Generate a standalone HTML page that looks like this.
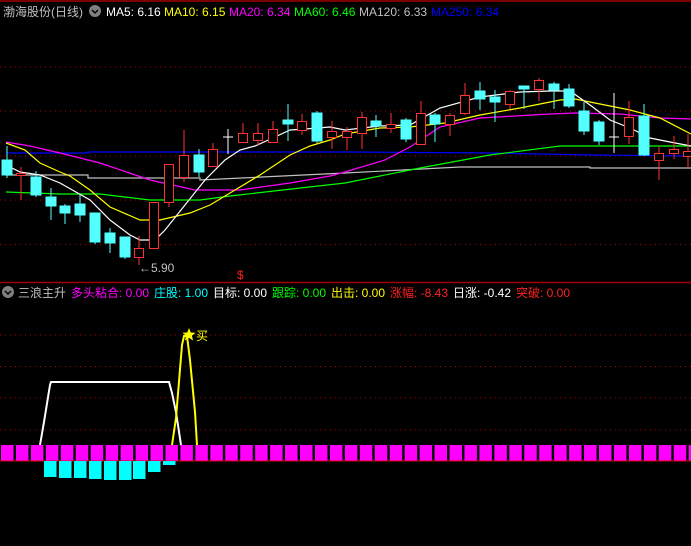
<!DOCTYPE html>
<html><head><meta charset="utf-8"><style>
html,body{margin:0;padding:0;background:#000;width:691px;height:546px;overflow:hidden}
svg{display:block}
text{font-family:"Liberation Sans","Noto Sans CJK SC",sans-serif;font-size:12px}
</style></head><body>
<svg width="691" height="546" viewBox="0 0 691 546" xmlns="http://www.w3.org/2000/svg">
<defs>
<pattern id="mb" x="1" y="445" width="14.95" height="16" patternUnits="userSpaceOnUse"><rect x="0" y="0" width="12.5" height="16" fill="#ff00ff"/></pattern>
</defs>
<rect width="691" height="546" fill="#000"/>
<line x1="0" y1="1" x2="691" y2="1" stroke="#a00000" stroke-width="1.5"/>
<line x1="0" y1="282.5" x2="691" y2="282.5" stroke="#a00000" stroke-width="1.5"/>
<g stroke="#b00000" stroke-dasharray="1,4" stroke-width="1">
<line x1="0" y1="67" x2="691" y2="67"/><line x1="0" y1="111" x2="691" y2="111"/><line x1="0" y1="156" x2="691" y2="156"/><line x1="0" y1="200" x2="691" y2="200"/><line x1="0" y1="244.5" x2="691" y2="244.5"/>
<line x1="0" y1="335" x2="691" y2="335"/><line x1="0" y1="366.5" x2="691" y2="366.5"/><line x1="0" y1="398" x2="691" y2="398"/><line x1="0" y1="430" x2="691" y2="430"/>
</g>
<!-- header -->
<text x="3" y="16" fill="#c0c0c0" font-size="13">渤海股份(日线)</text>
<circle cx="95" cy="11" r="6" fill="#808080"/><path d="M92 10l3 3 3-3" stroke="#000" fill="none" stroke-width="1.5"/>
<text x="106" y="16" fill="#fff">MA5: 6.16</text>
<text x="164" y="16" fill="#ffff00">MA10: 6.15</text>
<text x="229" y="16" fill="#ff00ff">MA20: 6.34</text>
<text x="294" y="16" fill="#00ff00">MA60: 6.46</text>
<text x="359" y="16" fill="#c0c0c0">MA120: 6.33</text>
<text x="431" y="16" fill="#0000ff">MA250: 6.34</text>
<!-- MAs -->
<g fill="none" stroke-width="1.2">
<polyline stroke="#0000ff" points="6,153 88,153 88,152 345,152 490,153 590,155 691,156"/>
<polyline stroke="#c0c0c0" points="6,175 88,175 88,178 200,178 200,180 345,173 460,167 590,167 590,168 691,168"/>
<polyline stroke="#00ff00" points="6,192 60,194 100,194 150,200 200,200 230,196 345,183 420,168 490,155 560,146 691,146"/>
<polyline stroke="#ff00ff" points="6,142 30,146 60,153 100,163 150,180 195,190 240,190 290,183 330,176 345,172 385,160 410,147 440,127 480,118 550,114 575,113 620,114 660,118 691,119"/>
<polyline stroke="#ffff00" points="6,143 25,150 40,163 60,172 70,176 90,190 110,207 140,220 160,220 190,213 210,205 235,190 260,175 290,155 310,146 330,140 345,134 380,128 410,127 445,123 480,115 520,108 560,100 575,99 600,104 630,110 660,118 691,134"/>
<polyline stroke="#ffffff" points="6,165 20,172 40,175 60,183 90,200 110,220 130,235 140,240 155,240 165,230 185,205 205,180 225,160 240,150 255,146 275,137 290,130 305,129 330,127 345,130 380,126 410,125 440,108 480,97 520,92 550,91 570,91 590,105 610,120 630,128 650,138 670,142 691,146"/>
</g>
<!-- candles cyan -->
<g stroke="#54ffff" fill="#54ffff">
<line x1="7" y1="146" x2="7" y2="178"/><rect x="2" y="160" width="10" height="15"/>
<line x1="36" y1="171" x2="36" y2="197"/><rect x="31" y="177" width="10" height="18"/>
<line x1="51" y1="188" x2="51" y2="220"/><rect x="46" y="197" width="10" height="9"/>
<line x1="65" y1="204" x2="65" y2="224"/><rect x="60" y="206" width="10" height="7"/>
<line x1="80" y1="195" x2="80" y2="222"/><rect x="75" y="204" width="10" height="11"/>
<line x1="95" y1="213" x2="95" y2="244"/><rect x="90" y="213" width="10" height="29"/>
<line x1="110" y1="228" x2="110" y2="253"/><rect x="105" y="233" width="10" height="10"/>
<line x1="125" y1="237" x2="125" y2="259"/><rect x="120" y="237" width="10" height="20"/>
<line x1="199" y1="149" x2="199" y2="177"/><rect x="194" y="155" width="10" height="17"/>
<line x1="288" y1="104" x2="288" y2="141"/><rect x="283" y="120" width="10" height="4"/>
<line x1="317" y1="111" x2="317" y2="143"/><rect x="312" y="113" width="10" height="28"/>
<line x1="376" y1="115" x2="376" y2="137"/><rect x="371" y="121" width="10" height="5"/>
<line x1="406" y1="118" x2="406" y2="142"/><rect x="401" y="120" width="10" height="19"/>
<line x1="435" y1="113" x2="435" y2="142"/><rect x="430" y="115" width="10" height="9"/>
<line x1="480" y1="82" x2="480" y2="110"/><rect x="475" y="91" width="10" height="8"/>
<line x1="495" y1="90" x2="495" y2="122"/><rect x="490" y="97" width="10" height="5"/>
<line x1="524" y1="86" x2="524" y2="109"/><rect x="519" y="86" width="10" height="3"/>
<line x1="554" y1="82" x2="554" y2="109"/><rect x="549" y="84" width="10" height="6"/>
<line x1="569" y1="84" x2="569" y2="108"/><rect x="564" y="89" width="10" height="17"/>
<line x1="584" y1="102" x2="584" y2="135"/><rect x="579" y="111" width="10" height="20"/>
<line x1="599" y1="120" x2="599" y2="145"/><rect x="594" y="122" width="10" height="19"/>
<line x1="644" y1="104" x2="644" y2="156"/><rect x="639" y="116" width="10" height="39"/>
</g>
<!-- candles red -->
<g stroke="#ff3232" fill="#000">
<line x1="21" y1="167" x2="21" y2="200"/><rect x="16.5" y="173.5" width="9" height="2"/>
<line x1="139" y1="236" x2="139" y2="265"/><rect x="134.5" y="248.5" width="9" height="9"/>
<line x1="154" y1="202" x2="154" y2="248"/><rect x="149.5" y="202.5" width="9" height="46"/>
<line x1="169" y1="164" x2="169" y2="207"/><rect x="164.5" y="164.5" width="9" height="38"/>
<line x1="184" y1="130" x2="184" y2="182"/><rect x="179.5" y="155.5" width="9" height="22"/>
<line x1="213" y1="143" x2="213" y2="166"/><rect x="208.5" y="149.5" width="9" height="17"/>
<line x1="243" y1="123" x2="243" y2="142"/><rect x="238.5" y="133.5" width="9" height="9"/>
<line x1="258" y1="123" x2="258" y2="145"/><rect x="253.5" y="133.5" width="9" height="7"/>
<line x1="273" y1="121" x2="273" y2="143"/><rect x="268.5" y="129.5" width="9" height="13"/>
<line x1="302" y1="114" x2="302" y2="135"/><rect x="297.5" y="121.5" width="9" height="9"/>
<line x1="332" y1="121" x2="332" y2="149"/><rect x="327.5" y="131.5" width="9" height="6"/>
<line x1="347" y1="127" x2="347" y2="150"/><rect x="342.5" y="131.5" width="9" height="6"/>
<line x1="362" y1="112" x2="362" y2="149"/><rect x="357.5" y="117.5" width="9" height="16"/>
<line x1="391" y1="113" x2="391" y2="133"/><rect x="386.5" y="124.5" width="9" height="4"/>
<line x1="421" y1="101" x2="421" y2="145"/><rect x="416.5" y="113.5" width="9" height="31"/>
<line x1="450" y1="113" x2="450" y2="136"/><rect x="445.5" y="115.5" width="9" height="9"/>
<line x1="465" y1="83" x2="465" y2="115"/><rect x="460.5" y="95.5" width="9" height="18"/>
<line x1="510" y1="90" x2="510" y2="109"/><rect x="505.5" y="91.5" width="9" height="13"/>
<line x1="539" y1="78" x2="539" y2="101"/><rect x="534.5" y="80.5" width="9" height="9"/>
<line x1="629" y1="101" x2="629" y2="144"/><rect x="624.5" y="117.5" width="9" height="19"/>
<line x1="659" y1="147" x2="659" y2="180"/><rect x="654.5" y="153.5" width="9" height="7"/>
<line x1="674" y1="136" x2="674" y2="159"/><rect x="669.5" y="149.5" width="9" height="4"/>
<line x1="688" y1="134" x2="688" y2="167"/><rect x="683.5" y="151.5" width="9" height="5"/>
</g>
<g stroke="#fff"><line x1="228" y1="129" x2="228" y2="154"/><line x1="223" y1="137" x2="233" y2="137"/>
<line x1="614" y1="93" x2="614" y2="153"/><line x1="609" y1="137" x2="619" y2="137"/></g>
<text x="139" y="272" fill="#c0c0c0">←5.90</text>
<text x="237" y="279" fill="#ff2020" font-size="10">$</text>
<!-- lower header -->
<circle cx="8" cy="292" r="6" fill="#808080"/><path d="M5 291l3 3 3-3" stroke="#000" fill="none" stroke-width="1.5"/>
<text x="18" y="297" fill="#c0c0c0" font-size="13">三浪主升</text>
<text x="71" y="297" fill="#ff00ff">多头粘合: 0.00</text>
<text x="154" y="297" fill="#00ffff">庄股: 1.00</text>
<text x="213" y="297" fill="#fff">目标: 0.00</text>
<text x="272" y="297" fill="#00ff00">跟踪: 0.00</text>
<text x="331" y="297" fill="#ffff00">出击: 0.00</text>
<text x="390" y="297" fill="#ff2020">涨幅: -8.43</text>
<text x="453" y="297" fill="#fff">日涨: -0.42</text>
<text x="516" y="297" fill="#ff2020">突破: 0.00</text>
<!-- indicator -->
<rect x="0" y="445" width="691" height="16" fill="url(#mb)"/>
<line x1="0" y1="461" x2="691" y2="461" stroke="#e00000" stroke-width="1"/>
<g fill="#00ffff">
<rect x="44" y="461" width="12.5" height="16"/><rect x="59" y="461" width="12.5" height="17"/><rect x="74" y="461" width="12.5" height="17"/><rect x="89" y="461" width="12.5" height="18"/><rect x="104" y="461" width="12.5" height="19"/><rect x="119" y="461" width="12.5" height="19"/><rect x="133" y="461" width="12.5" height="18"/><rect x="148" y="461" width="12.5" height="11"/><rect x="163" y="461" width="12.5" height="4"/>
</g>
<polyline points="40,445 44,422 50,385 51,382 169,382 172,393 176,412 181,445" fill="none" stroke="#fff" stroke-width="2"/>
<polyline points="172,445 176,418 182,345 184,336 187,336 190,360 195,412 197,445" fill="none" stroke="#ffff00" stroke-width="2"/>
<path d="M189 328l1.8 4.5 4.8.3-3.7 3 1.2 4.7-4.1-2.6-4.1 2.6 1.2-4.7-3.7-3 4.8-.3z" fill="#ffff00"/>
<text x="196" y="340" fill="#ffff00" font-size="11">买</text>
</svg>
</body></html>
